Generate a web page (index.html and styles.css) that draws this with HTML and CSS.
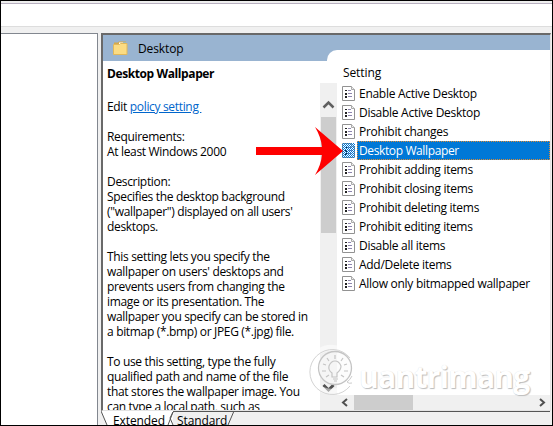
FILE: index.html
```html
<!DOCTYPE html>
<html lang="en"><head><meta charset="utf-8"><title>Desktop</title><link rel="stylesheet" href="styles.css"></head>
<body>
<svg class="defs" width="0" height="0"><defs>
<symbol id="doc" viewBox="0 0 13 15"><path d="M.5.5h9l3 3v11H.5z" fill="#fff" stroke="#929292"/><path d="M9.5.5v3h3" fill="#eee" stroke="#aaa"/><path d="M3 4h2v1H3zM3 7h2v2H3zM3 10h2v2H3z" fill="#222"/><path d="M6 4.500h3M6 7.500h4M6 10.500h4" stroke="#8e86ae"/></symbol>
</defs></svg>
<div class="window">
  <div class="toolbar"></div>
  <div class="panes">
    <div class="tree"></div>
    <div class="right">
      <div class="content">
        <header class="header">
          <svg class="folder" width="15" height="14" viewBox="0 0 15 14"><path d="M1 3.500V1.500h4l1-1h7v3z" fill="#d6a94b"/><path d="M6 1.500h7v2H6z" fill="#fff"/><path d="M10 1.500h3v1h-3z" fill="#4ba3d8"/><path d="M.5 3.500h6l1-1h6.500v11H.5z" fill="#fbdc83" stroke="#e1b85b"/></svg>
          <span>Desktop</span>
        </header>
        <div class="body">
          <section class="description">
            <h1>Desktop Wallpaper</h1>
            <p>Edit <a>policy setting&nbsp;</a></p>
            <p>Requirements:<br>At least Windows 2000</p>
            <p>Description:<br>Specifies the desktop background<br>("wallpaper") displayed on all users'<br>desktops.</p>
            <p>This setting lets you specify the<br>wallpaper on users' desktops and<br>prevents users from changing the<br>image or its presentation. The<br>wallpaper you specify can be stored in<br>a bitmap (*.bmp) or JPEG (*.jpg) file.</p>
            <p>To use this setting, type the fully<br>qualified path and name of the file<br>that stores the wallpaper image. You<br>can type a local path, such as</p>
          </section>
          <div class="vscroll">
            <svg width="17" height="34" viewBox="0 0 17 34"><path d="m3.500 24.500 5-5 5 5" fill="none" stroke="#606060" stroke-width="2.500"/></svg>
            <div class="vthumb"></div>
            <svg class="down" width="17" height="34" viewBox="0 0 17 34"><path d="m3.500 8 5 5 5-5" fill="none" stroke="#505050" stroke-width="3"/></svg>
          </div>
          <section class="settings">
            <h2>Setting</h2>
            <ul>
              <li><svg><use href="#doc"/></svg><span>Enable Active Desktop</span></li>
              <li><svg><use href="#doc"/></svg><span>Disable Active Desktop</span></li>
              <li><svg><use href="#doc"/></svg><span>Prohibit changes</span></li>
              <li class="selected"><i class="dither"><svg><use href="#doc"/></svg></i><span>Desktop Wallpaper</span></li>
              <li><svg><use href="#doc"/></svg><span>Prohibit adding items</span></li>
              <li><svg><use href="#doc"/></svg><span>Prohibit closing items</span></li>
              <li><svg><use href="#doc"/></svg><span>Prohibit deleting items</span></li>
              <li><svg><use href="#doc"/></svg><span>Prohibit editing items</span></li>
              <li><svg><use href="#doc"/></svg><span>Disable all items</span></li>
              <li><svg><use href="#doc"/></svg><span>Add/Delete items</span></li>
              <li><svg><use href="#doc"/></svg><span>Allow only bitmapped wallpaper</span></li>
            </ul>
            <div class="hscroll">
              <svg width="17" height="15" viewBox="0 0 17 15"><path d="m10 4-4 3.500 4 3.500" fill="none" stroke="#505050" stroke-width="2"/></svg>
              <div class="hthumb"></div>
              <svg class="next" width="17" height="15" viewBox="0 0 17 15"><path d="m7 4 4 3.500-4 3.500" fill="none" stroke="#505050" stroke-width="2"/></svg>
            </div>
          </section>
        </div>
      </div>
      <footer class="tabs">
        <svg width="449" height="14" viewBox="0 0 449 14"><path d="M0 0h73l-2 14H6z" fill="#fff"/><path d="m0 0 6 14M72 1l-3 6 3 7M72 1l-5 13M72 .5h377M127 14l6-14" fill="none" stroke="#555"/></svg>
        <span class="extended">Extended</span><span class="standard">Standard</span>
      </footer>
    </div>
  </div>
</div>
<svg class="arrow" width="88" height="50" viewBox="0 0 88 50"><path d="M0 20h66Q65 10 59 0L87 24 59 48Q65 38 66 28H0z" fill="#fe0000"/></svg>
<div class="watermark">
  <svg width="46" height="52" viewBox="0 0 46 52"><g fill="none"><path d="M39 40A22 22 0 1 1 42 16" stroke="#fff" stroke-opacity=".5" stroke-width="6"/><path d="M41 42A22.500 22.500 0 1 1 41 14" stroke="#d4d4d4"/><path d="M43 32Q41 36 38 38q2 2 5 1" stroke="#ccc"/><circle cx="26" cy="24" r="16.500" fill="#fafafa" fill-opacity=".5" stroke="#c4c4c4" stroke-width="1.300"/><path d="M23 33v-4q-4-3-3-7 2-5 6-5t6 5q0 4-4 7v4zM24 35h5M25 37h3M26 11v4M18 14l2 3M34 14l-2 3M14 20l3 1M38 20l-3 1M13 27h4M39 27h-4M17 33l3-2M35 33l-3-2" stroke="#c4c4c4" stroke-width="1.200"/></g></svg>
  <span>uantrimang</span>
</div>
</body></html>
```
FILE: styles.css
```css
* { box-sizing: border-box; }
body { margin: 0; font: 12px/15px "Open Sans", "Noto Sans", sans-serif; color: #000; letter-spacing: -.28px; overflow: hidden; }
.defs { position: absolute; }
h1, h2, p, ul { margin: 0; padding: 0; font-size: 12px; font-weight: 400; }
.window { width: 553px; height: 426px; border: 1px solid #000; background: #f0f0f0; display: flex; flex-direction: column; }
.toolbar { height: 26px; border-top: 2px solid #eee; background: linear-gradient(#b8b0c0 1px, #fff 1px); border-bottom: 1px solid #ddd; }
.panes { display: flex; flex: 1; padding-top: 6px; }
.tree { width: 97px; background: #fff; border: solid #82878f; border-width: 1px 1px 0 0; }
.right { width: 450px; margin-left: 3px; display: flex; flex-direction: column; }
.content { height: 378px; border: solid #696969; border-width: 2px 1px 0 2px; border-right-color: #e3e3e3; border-bottom: 1px solid #e3e3e3; background: #fff; overflow: hidden; }
.header { height: 26px; background: #99b4d1; display: flex; align-items: center; padding-left: 10px; gap: 10px; letter-spacing: -.1px; }
.body { display: flex; height: 350px; }
.description { width: 217px; padding: 5px 0 0 4px; overflow: hidden; white-space: nowrap; letter-spacing: -.33px; }
.description h1 { font-weight: 700; height: 33px; letter-spacing: -.4px; }
.description p { margin-bottom: 15px; }
a { color: #0066cc; text-decoration: underline; }
.vscroll { width: 17px; margin-top: 22px; background: #f0f0f0; display: flex; flex-direction: column; }
.vscroll svg, .hscroll svg { display: block; flex: none; }
.vthumb { height: 116px; margin: 0 1px; background: #cdcdcd; }
.down { margin-top: auto; }
.settings { flex: 1; margin: -11px 0 0 -10px; padding-left: 10px; border-top-left-radius: 10px; display: flex; flex-direction: column; background: linear-gradient(#fff, #fff) top / 100% 33px no-repeat; }
.settings h2 { height: 34px; padding: 15px 0 0 6px; letter-spacing: -.1px; }
li { display: flex; height: 19px; align-items: center; padding-left: 5px; white-space: nowrap; }
li svg { display: block; width: 13px; height: 15px; }
li span { margin-left: 2px; padding-left: 2px; line-height: 17px; }
.selected span { flex: 1; line-height: 19px; color: #fff; background: #0078d7; letter-spacing: -.38px; outline: 1px dotted #dc8a35; outline-offset: -1px; }
.dither { display: block; background: #fff; position: relative; }
.dither::after { content: ""; position: absolute; inset: 0; background: repeating-conic-gradient(#0078d7 0 25%, transparent 0 50%) 0 0 / 2px 2px; }
.hscroll { height: 15px; margin: auto 0 1px; background: #f0f0f0; display: flex; }
.hthumb { width: 59px; background: #cdcdcd; }
.next { margin-left: auto; }
.tabs { height: 14px; position: relative; overflow: hidden; letter-spacing: -.1px; }
.tabs svg { display: block; }
.tabs span { position: absolute; top: 2px; }
.extended { left: 12px; }
.standard { left: 76px; }
.arrow { position: absolute; left: 256px; top: 127px; }
.watermark { position: absolute; left: 309px; top: 344px; display: flex; }
.watermark span { margin: 15px 0 0 4px; font: 700 30px/36px "Open Sans", sans-serif; color: #fff; letter-spacing: -.7px; text-shadow: 1px 1px 1px #bcbcbc, 0 0 1px #e0e0e0; }
```
